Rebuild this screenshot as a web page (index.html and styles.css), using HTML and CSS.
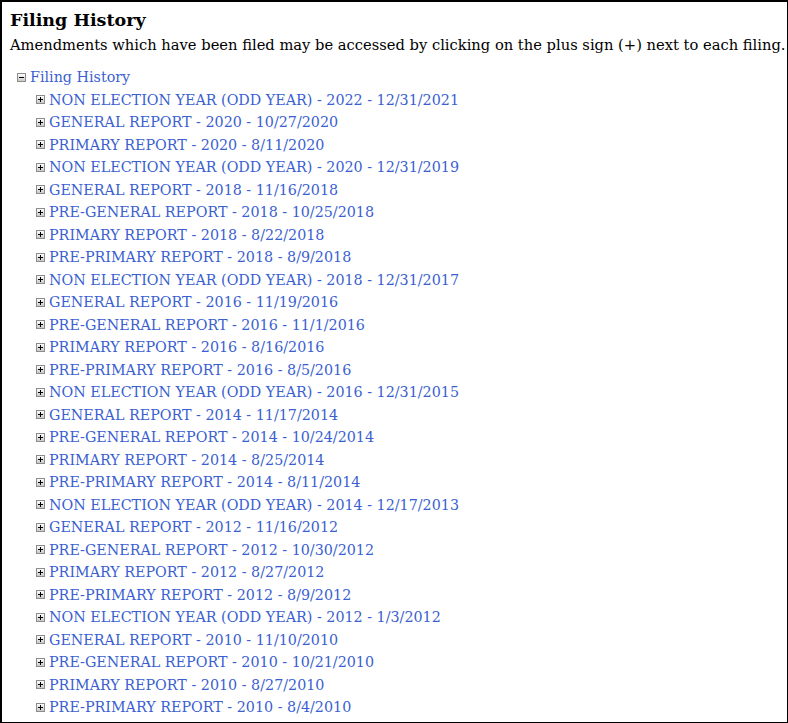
FILE: index.html
```html
<!DOCTYPE html>
<html lang="en">
  <head>
    <meta charset="UTF-8" />
    <title>Filing History</title>
    <link rel="stylesheet" href="styles.css">
  </head>
  <body>
    <div class="panel">
      <h3 class="title">Filing History</h3>
      <p class="note">Amendments which have been filed may be accessed by clicking on the plus sign (+) next to each filing.</p>
      <div class="tree">
        <div class="root"><span class="box minus"></span><a href="#">Filing History</a></div>
        <ul class="filings">
          <li><span class="box plus"></span><a href="#">NON ELECTION YEAR (ODD YEAR) - 2022 - 12/31/2021</a></li>
          <li><span class="box plus"></span><a href="#">GENERAL REPORT - 2020 - 10/27/2020</a></li>
          <li><span class="box plus"></span><a href="#">PRIMARY REPORT - 2020 - 8/11/2020</a></li>
          <li><span class="box plus"></span><a href="#">NON ELECTION YEAR (ODD YEAR) - 2020 - 12/31/2019</a></li>
          <li><span class="box plus"></span><a href="#">GENERAL REPORT - 2018 - 11/16/2018</a></li>
          <li><span class="box plus"></span><a href="#">PRE-GENERAL REPORT - 2018 - 10/25/2018</a></li>
          <li><span class="box plus"></span><a href="#">PRIMARY REPORT - 2018 - 8/22/2018</a></li>
          <li><span class="box plus"></span><a href="#">PRE-PRIMARY REPORT - 2018 - 8/9/2018</a></li>
          <li><span class="box plus"></span><a href="#">NON ELECTION YEAR (ODD YEAR) - 2018 - 12/31/2017</a></li>
          <li><span class="box plus"></span><a href="#">GENERAL REPORT - 2016 - 11/19/2016</a></li>
          <li><span class="box plus"></span><a href="#">PRE-GENERAL REPORT - 2016 - 11/1/2016</a></li>
          <li><span class="box plus"></span><a href="#">PRIMARY REPORT - 2016 - 8/16/2016</a></li>
          <li><span class="box plus"></span><a href="#">PRE-PRIMARY REPORT - 2016 - 8/5/2016</a></li>
          <li><span class="box plus"></span><a href="#">NON ELECTION YEAR (ODD YEAR) - 2016 - 12/31/2015</a></li>
          <li><span class="box plus"></span><a href="#">GENERAL REPORT - 2014 - 11/17/2014</a></li>
          <li><span class="box plus"></span><a href="#">PRE-GENERAL REPORT - 2014 - 10/24/2014</a></li>
          <li><span class="box plus"></span><a href="#">PRIMARY REPORT - 2014 - 8/25/2014</a></li>
          <li><span class="box plus"></span><a href="#">PRE-PRIMARY REPORT - 2014 - 8/11/2014</a></li>
          <li><span class="box plus"></span><a href="#">NON ELECTION YEAR (ODD YEAR) - 2014 - 12/17/2013</a></li>
          <li><span class="box plus"></span><a href="#">GENERAL REPORT - 2012 - 11/16/2012</a></li>
          <li><span class="box plus"></span><a href="#">PRE-GENERAL REPORT - 2012 - 10/30/2012</a></li>
          <li><span class="box plus"></span><a href="#">PRIMARY REPORT - 2012 - 8/27/2012</a></li>
          <li><span class="box plus"></span><a href="#">PRE-PRIMARY REPORT - 2012 - 8/9/2012</a></li>
          <li><span class="box plus"></span><a href="#">NON ELECTION YEAR (ODD YEAR) - 2012 - 1/3/2012</a></li>
          <li><span class="box plus"></span><a href="#">GENERAL REPORT - 2010 - 11/10/2010</a></li>
          <li><span class="box plus"></span><a href="#">PRE-GENERAL REPORT - 2010 - 10/21/2010</a></li>
          <li><span class="box plus"></span><a href="#">PRIMARY REPORT - 2010 - 8/27/2010</a></li>
          <li><span class="box plus"></span><a href="#">PRE-PRIMARY REPORT - 2010 - 8/4/2010</a></li>
        </ul>
      </div>
    </div>
  </body>
</html>
```

FILE: styles.css
```css
body {
  margin: 0;
  background: #fff;
  font-family: "DejaVu Serif", "Liberation Serif", serif;
  color: #000;
}
.panel {
  width: 769px;
  height: 720px;
  border: 2px solid #000;
  overflow: hidden;
  padding: 0 8px;
}
.title {
  font-size: 17.5px;
  font-weight: bold;
  margin: 7px 0 0;
  line-height: 22px;
}
.note {
  font-size: 14.7px;
  margin: 2px 0 0;
  line-height: 24px;
  white-space: nowrap;
}
.tree {
  margin-top: 9px;
  padding-left: 7px;
  font-size: 14.3px;
}
.tree a {
  color: #3b5fd1;
  text-decoration: none;
}
.root,
.filings li {
  height: 22.5px;
  line-height: 22.5px;
  display: flex;
  align-items: center;
  white-space: nowrap;
}
.filings {
  list-style: none;
  margin: 0;
  padding: 0 0 0 19px;
}
.box {
  position: relative;
  width: 7px;
  height: 7px;
  border: 1px solid #8c8c8c;
  background: linear-gradient(#fdfdfd, #c9c9c9);
  margin-right: 4px;
  flex: none;
}
.box::before,
.box::after {
  content: "";
  position: absolute;
  background: #000;
}
.box::before {
  left: 1px;
  top: 3px;
  width: 5px;
  height: 1px;
}
.plus::after {
  left: 3px;
  top: 1px;
  width: 1px;
  height: 5px;
}
```
